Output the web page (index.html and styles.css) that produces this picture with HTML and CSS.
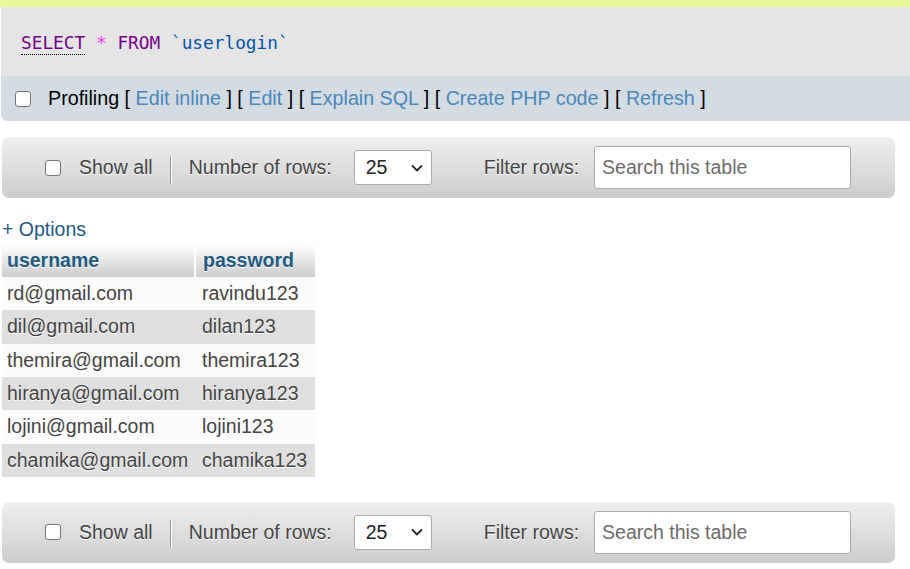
FILE: index.html
```html
<!DOCTYPE html>
<html>
<head>
<meta charset="utf-8">
<link rel="stylesheet" href="styles.css">
</head>
<body>
<div class="page">
  <div class="topstrip"></div>
  <div class="sqlbox">
    <code class="sql"><span class="kw kw-link">SELECT</span> <span class="op">*</span> <span class="kw">FROM</span> <span class="var">`userlogin`</span></code>
  </div>
  <div class="tools">
    <input type="checkbox" class="cb">
    <span class="toolline">Profiling [ <a class="tlink">Edit inline</a> ] [ <a class="tlink">Edit</a> ] [ <a class="tlink">Explain SQL</a> ] [ <a class="tlink">Create PHP code</a> ] [ <a class="tlink">Refresh</a> ]</span>
  </div>

  <div class="navbar nav-top">
    <input type="checkbox" class="cb nav-cb">
    <span class="navtext">Show all</span>
    <span class="sep"></span>
    <span class="navtext">Number of rows:</span>
    <div class="select"><span>25</span><svg width="12" height="8" viewBox="0 0 12 8"><path d="M1 1.5 L6 6.5 L11 1.5" fill="none" stroke="#222" stroke-width="1.8"/></svg></div>
    <span class="navtext filter">Filter rows:</span>
    <div class="search">Search this table</div>
  </div>

  <div class="options">+ Options</div>

  <table class="data">
    <thead>
      <tr><th class="c1">username</th><th class="c2">password</th></tr>
    </thead>
    <tbody>
      <tr><td class="c1">rd@gmail.com</td><td class="c2">ravindu123</td></tr>
      <tr class="even"><td class="c1">dil@gmail.com</td><td class="c2">dilan123</td></tr>
      <tr><td class="c1">themira@gmail.com</td><td class="c2">themira123</td></tr>
      <tr class="even"><td class="c1">hiranya@gmail.com</td><td class="c2">hiranya123</td></tr>
      <tr><td class="c1">lojini@gmail.com</td><td class="c2">lojini123</td></tr>
      <tr class="even"><td class="c1">chamika@gmail.com</td><td class="c2">chamika123</td></tr>
    </tbody>
  </table>

  <div class="navbar nav-bottom">
    <input type="checkbox" class="cb nav-cb">
    <span class="navtext">Show all</span>
    <span class="sep"></span>
    <span class="navtext">Number of rows:</span>
    <div class="select"><span>25</span><svg width="12" height="8" viewBox="0 0 12 8"><path d="M1 1.5 L6 6.5 L11 1.5" fill="none" stroke="#222" stroke-width="1.8"/></svg></div>
    <span class="navtext filter">Filter rows:</span>
    <div class="search">Search this table</div>
  </div>
</div>
</body>
</html>
```

FILE: styles.css
```css
* { box-sizing: border-box; }
html, body { margin: 0; padding: 0; background: #fff; }
body {
  font-family: "Liberation Sans", Arial, sans-serif;
  font-size: 19.5px;
  color: #444;
  width: 910px;
  height: 569px;
  overflow: hidden;
}
.page { width: 910px; }

.topstrip { height: 7px; background: #e9f99b; }

.sqlbox {
  height: 69px;
  background: #e5e5e5;
  margin-left: 1px;
  padding: 24px 0 0 20px;
}
.sql {
  font-family: "DejaVu Sans Mono", "Liberation Mono", monospace;
  font-size: 17.8px;
  line-height: 21px;
  white-space: pre;
}
.kw { color: #770088; }
.kw-link { border-bottom: 1px dotted #000; padding-bottom: 1px; }
.op { color: #ee33ee; }
.var { color: #0055aa; }

.tools {
  height: 45px;
  background: #d3dce3;
  margin-left: 1px;
  border-bottom-left-radius: 6px;
  display: flex;
  align-items: center;
  padding-left: 14px;
  color: #000;
}
.toolline { white-space: pre; color: #000; font-size: 19.7px; }
.cb {
  -webkit-appearance: none;
  appearance: none;
  width: 16px;
  height: 16px;
  margin: 0;
  border: 1.5px solid #767676;
  border-radius: 3px;
  background: #fff;
  flex: none;
}
.tools .cb { margin-right: 17px; }
.tlink { color: #4a87b8; }

.navbar {
  margin-left: 2px;
  width: 893px;
  height: 61px;
  border-radius: 7px;
  background: linear-gradient(#efefef, #cdcdcd);
  display: flex;
  align-items: center;
  padding-left: 43px;
  color: #444;
}
.nav-top { margin-top: 16px; }
.nav-bottom { margin-top: 25px; }
.navtext { text-shadow: 0 1px 0 #fff; white-space: nowrap; }
.nav-cb { margin-right: 18px; }
.sep {
  width: 2px;
  height: 28px;
  background: #9a9a9a;
  border-right: 1px solid #fff;
  margin: 4px 17px 0 17px;
}
.select {
  width: 78px;
  height: 35px;
  margin-left: 22px;
  background: #fff;
  border: 1px solid #aaa;
  border-radius: 3px;
  display: flex;
  align-items: center;
  justify-content: space-between;
  padding: 0 8px 0 11px;
  color: #222;
}
.filter { margin-left: 52px; }
.search {
  width: 257px;
  height: 43px;
  margin-left: 15px;
  background: #fff;
  border: 1px solid #aaa;
  border-radius: 3px;
  padding-left: 7px;
  display: flex;
  align-items: center;
  color: #6c6c6c;
}

.options {
  margin: 18px 0 0 2px;
  height: 26px;
  line-height: 26px;
  color: #235a81;
}

.data {
  margin-top: 2px;
  margin-left: 2px;
  border-collapse: separate;
  border-spacing: 0;
}
.data th {
  height: 33px;
  padding: 0 0 0 5px;
  text-align: left;
  font-weight: bold;
  color: #235a81;
  text-shadow: 0 1px 0 #fff;
  background: linear-gradient(#ffffff, #cccccc);
}
.data .c1 { width: 194px; }
.data .c2 { width: 119px; padding-left: 7px; }
.data th.c1 { border-right: 2px solid #fff; }
.data td.c1 { border-right: 2px solid transparent; }
.data td {
  height: 33.33px;
  padding: 0 0 0 5px;
  color: #444;
  text-shadow: 0 1px 0 #fff;
  white-space: nowrap;
}
.data td.c2 { padding-left: 6px; }
.data tbody tr { background: #fcfcfc; }
.data tbody tr.even { background: #dfdfdf; }
```
